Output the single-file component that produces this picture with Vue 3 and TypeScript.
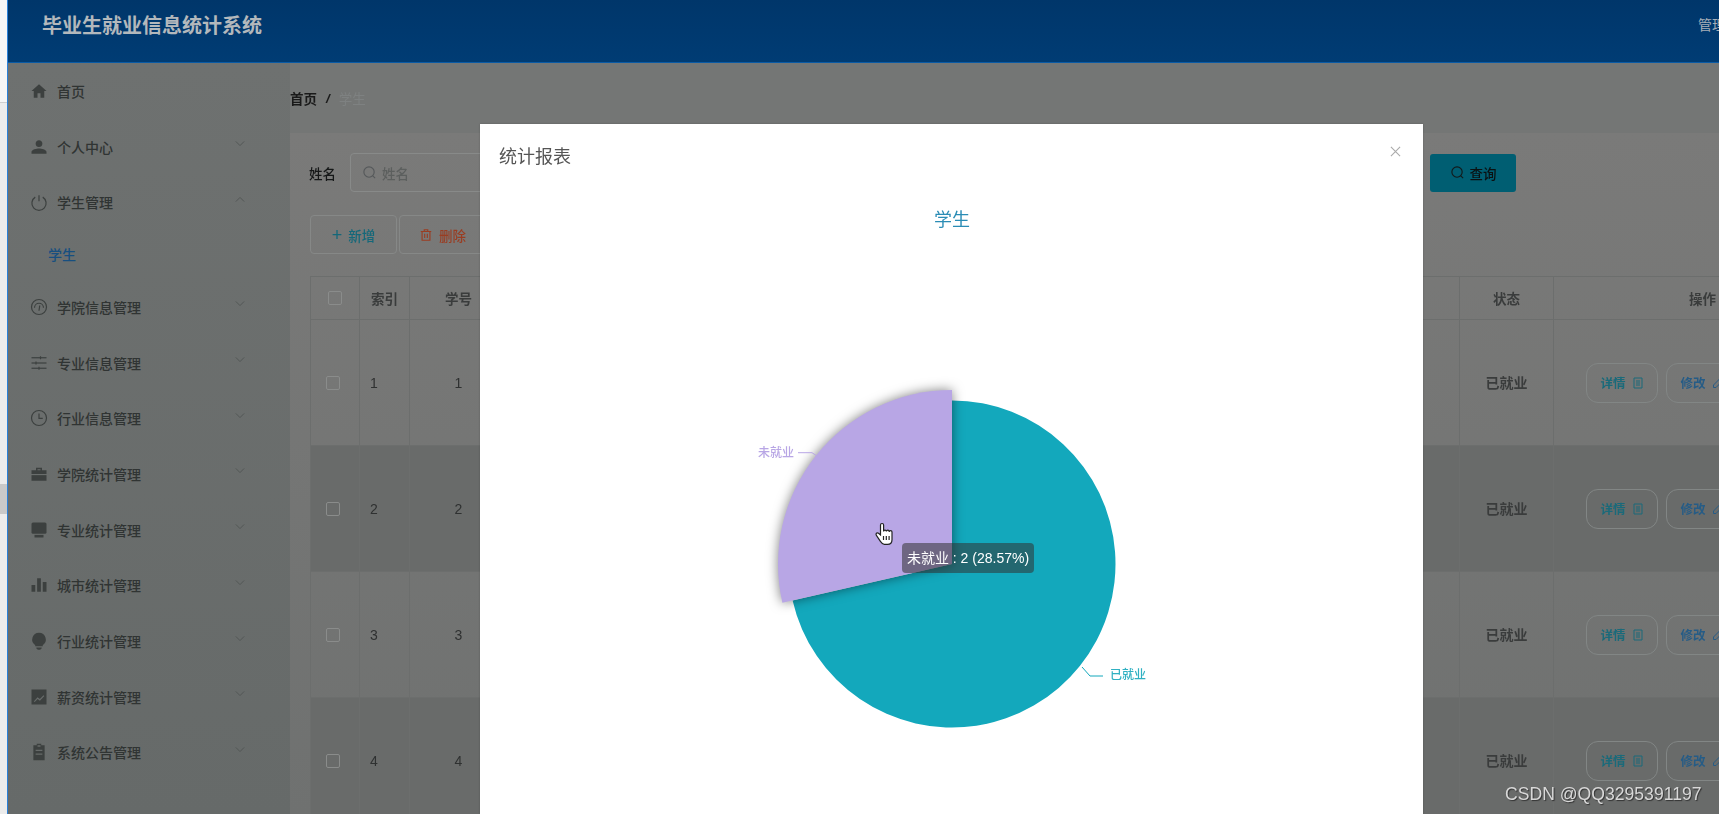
<template>
  <div class="screen">
    <div class="behind">
      <div class="behind-top"></div>
      <div class="behind-tab"></div>
    </div>

    <div class="page">
      <header class="topbar">
        <div class="brand">毕业生就业信息统计系统</div>
        <div class="user">管理员 admin</div>
      </header>

      <div class="body">
        <aside class="sidebar">
          <template v-for="item in menu" :key="item.label">
            <div class="menu-item">
              <svg class="menu-icon" viewBox="0 0 24 24">
                <path v-for="d in item.fill" :key="d" :d="d" class="solid" />
                <path v-for="d in item.line" :key="d" :d="d" class="outline" />
              </svg>
              <span>{{ item.label }}</span>
              <svg v-if="item.arrow" class="chevron" viewBox="0 0 12 8">
                <path :d="item.arrow === 'up' ? 'M1 6.5 6 1.5l5 5' : 'M1 1.5l5 5 5-5'" />
              </svg>
            </div>
            <div v-if="item.sub" class="menu-sub">{{ item.sub }}</div>
          </template>
        </aside>

        <main class="content">
          <div class="crumbs">
            <b>首页</b>
            <i>/</i>
            <span>学生</span>
          </div>

          <section class="card">
            <div class="search">
              <label>姓名</label>
              <div class="field">
                <svg class="field-icon" viewBox="0 0 16 16">
                  <circle cx="7.5" cy="7.5" r="5.5" />
                  <path d="M11.5 11.5 14 14" />
                </svg>
                <span>姓名</span>
              </div>
              <button class="query">
                <svg class="field-icon dark" viewBox="0 0 16 16">
                  <circle cx="7.5" cy="7.5" r="5.5" />
                  <path d="M11.5 11.5 14 14" />
                </svg>
                查询
              </button>
            </div>

            <div class="actions">
              <button class="tool add"><em>+</em>新增</button>
              <button class="tool del">
                <svg class="bin" viewBox="0 0 16 16">
                  <path d="M2 4h12M6 4V2h4v2M3.5 4v10h9V4M6.5 6.5v5M9.5 6.5v5" />
                </svg>
                删除
              </button>
            </div>

            <div class="table">
              <div class="row head">
                <div class="cell"><span class="check head-check"></span></div>
                <div class="cell center">索引</div>
                <div class="cell center">学号</div>
                <div class="cell"></div>
                <div class="cell center">状态</div>
                <div class="cell center">操作</div>
              </div>
              <div v-for="n in rows" :key="n" class="row item" :class="{ stripe: n % 2 === 0 }">
                <div class="cell"><span class="check"></span></div>
                <div class="cell index">{{ n }}</div>
                <div class="cell center">{{ n }}</div>
                <div class="cell"></div>
                <div class="cell center status">已就业</div>
                <div class="cell ops">
                  <button class="op detail">
                    详情
                    <svg viewBox="0 0 12 12"><path d="M2 1h8v10H2zM4 4h4M4 6h4M4 8h4" /></svg>
                  </button>
                  <button class="op edit">
                    修改
                    <svg viewBox="0 0 12 12"><path d="M8 1.500 10.500 4 4 10.500H1.500V8z" /></svg>
                  </button>
                </div>
              </div>
            </div>
          </section>
        </main>
      </div>
    </div>

    <div class="dialog">
      <div class="dialog-head">
        <span>统计报表</span>
        <svg class="close" viewBox="0 0 12 12"><path d="M1 1l10 10M11 1 1 11" /></svg>
      </div>
      <div class="chart">
        <svg class="pie" viewBox="0 0 943 626">
          <text x="472" y="38" text-anchor="middle" class="chart-title">学生</text>
          <path :d="employedPath" fill="#13a8bc" />
          <path :d="unemployedPath" fill="#b8a6e5" class="lifted" />
          <polyline points="318,264.700 332,264.700 337,268" class="leader purple" />
          <text x="278" y="269" class="slice-label purple-text">未就业</text>
          <polyline points="602,479 610,488 623,488" class="leader teal" />
          <text x="630" y="491" class="slice-label teal-text">已就业</text>
        </svg>
        <div class="tooltip">未就业 : 2 (28.57%)</div>
        <svg class="hand" viewBox="0 0 24 24">
          <path d="M9 1.500c-.8 0-1.500.7-1.500 1.500v10l-2-1.800c-.7-.6-1.700-.5-2.200.2-.4.6-.3 1.400.1 2l4 6c.9 1.300 2.300 3 3.900 3h3.200c2.700 0 4.500-2 4.500-4.600V10c0-.8-.6-1.400-1.400-1.400s-1.400.6-1.400 1.400v-.5c0-.8-.6-1.400-1.400-1.400-.8 0-1.400.6-1.400 1.400 0-.8-.6-1.400-1.400-1.400s-1.400.6-1.400 1.400V3c0-.8-.7-1.500-1.500-1.500z" />
          <path d="M10.500 14v4M13.300 14v4M16.100 14v4" />
        </svg>
      </div>
    </div>

    <div class="watermark">CSDN @QQ3295391197</div>
  </div>
</template>

<script setup lang="ts">
interface MenuItem {
  label: string
  fill?: string[]
  line?: string[]
  arrow?: 'up' | 'down'
  sub?: string
}

const menu: MenuItem[] = [
  { label: '首页', fill: ['M10 21v-6h4v6h5v-9h3L12 3 2 12h3v9z'] },
  {
    label: '个人中心',
    arrow: 'down',
    fill: ['M12 12c2.600 0 4.500-2 4.500-4.500S14.600 3 12 3 7.500 5 7.500 7.500 9.400 12 12 12zm0 2c-3 0-10 1.500-10 4.500V21h20v-2.500c0-3-7-4.500-10-4.500z']
  },
  {
    label: '学生管理',
    arrow: 'up',
    sub: '学生',
    line: ['M12 3v8', 'M7 5.500a9.500 9.500 0 1 0 10 0']
  },
  {
    label: '学院信息管理',
    arrow: 'down',
    line: ['M12 2a10 10 0 1 0 0 20 10 10 0 0 0 0-20z', 'M6 13a6 6 0 1 1 12 0', 'M12 17l1-7']
  },
  {
    label: '专业信息管理',
    arrow: 'down',
    line: ['M2 5h20', 'M2 12h20', 'M2 19h20', 'M14 3v4', 'M8 10v4', 'M12 17v4']
  },
  {
    label: '行业信息管理',
    arrow: 'down',
    line: ['M12 2a10 10 0 1 0 0 20 10 10 0 0 0 0-20z', 'M12 6v6.500h5']
  },
  {
    label: '学院统计管理',
    arrow: 'down',
    fill: ['M8 7V3.500h8V7h6v5H2V7zm2-1.500V7h4V5.500z', 'M2 13.500h20V21H2z']
  },
  {
    label: '专业统计管理',
    arrow: 'down',
    fill: ['M4 2h16a2 2 0 0 1 2 2v11a2 2 0 0 1-2 2H4a2 2 0 0 1-2-2V4a2 2 0 0 1 2-2z', 'M6 18.500h12V22H6z']
  },
  {
    label: '城市统计管理',
    arrow: 'down',
    fill: ['M2 12h5v9H2z', 'M9.500 3h5v18h-5z', 'M17 8h5v13h-5z']
  },
  {
    label: '行业统计管理',
    arrow: 'down',
    fill: ['M12 1a9 9 0 0 0-5 16.500V19h10v-1.500A9 9 0 0 0 12 1z', 'M8.500 20.500h7V22l-2 1.500h-3l-2-1.500z']
  },
  {
    label: '薪资统计管理',
    arrow: 'down',
    fill: ['M2 2h20v20H2zM5 17.500l1.200 1 4-4 3 2.500 6-6.500-1.200-1-4.900 5.300-3-2.500-5.100 5.700z']
  },
  {
    label: '系统公告管理',
    arrow: 'down',
    fill: ['M9 1h6v2h4.500v20h-15V3H9zM7.500 9v1.500h9V9zm0 5v1.500h9V14zM10 3v2h4V3z']
  }
]

const rows = [1, 2, 3, 4]

const cx = 472
const cy = 376

// echarts style angle: clockwise from twelve o'clock
function point(r: number, deg: number): string {
  const a = (deg * Math.PI) / 180
  return `${(cx + r * Math.sin(a)).toFixed(2)} ${(cy - r * Math.cos(a)).toFixed(2)}`
}

function slice(r: number, from: number, to: number): string {
  const large = to - from > 180 ? 1 : 0
  return `M${cx} ${cy}L${point(r, from)}A${r} ${r} 0 ${large} 1 ${point(r, to)}Z`
}

const split = (5 / 7) * 360
const employedPath = slice(163.5, 0, split)
const unemployedPath = slice(174, split, 360)
</script>

<style>
html,
body {
  margin: 0;
  background: #f2f2f2;
}
</style>

<style scoped>
.screen {
  position: relative;
  display: flex;
  width: 1719px;
  height: 814px;
  overflow: hidden;
  font-family: "Liberation Sans", "Noto Sans CJK SC", sans-serif;
  font-size: 14px;
}

.behind {
  flex: none;
  width: 7px;
  background: #ececec;
  border-right: 1px solid #2a80d8;
}

.behind-top {
  height: 102px;
  background: #f6f6f6;
  border-bottom: 1px solid #cfcfcf;
}

.behind-tab {
  height: 30px;
  margin-top: 381px;
  background: #c9c9c9;
}

.page {
  flex: none;
  display: flex;
  flex-direction: column;
  width: 1843px;
  filter: blur(0.6px);
}

.topbar {
  flex: none;
  display: flex;
  align-items: flex-start;
  height: 62px;
  padding-left: 34px;
  background: linear-gradient(180deg, #00366a, #003c74);
  border-bottom: 1px solid #0a5ba5;
}

.brand {
  width: 1656px;
  line-height: 52px;
  font-size: 20px;
  font-weight: 700;
  color: #b3b8bc;
}

.user {
  line-height: 50px;
  white-space: nowrap;
  color: #a8afb8;
}

.body {
  flex: 1;
  display: flex;
  min-height: 0;
}

.sidebar {
  flex: none;
  width: 282px;
  background: linear-gradient(180deg, #6e7170, #666a69);
  color: #303433;
  font-weight: 500;
}

.menu-item {
  display: flex;
  align-items: center;
  height: 55.700px;
  padding-left: 22px;
}

.menu-icon {
  flex: none;
  width: 18px;
  height: 18px;
  margin-right: 9px;
}

.solid {
  fill: #3c403f;
}

.outline {
  fill: none;
  stroke: #3c403f;
  stroke-width: 1.600;
}

.chevron {
  width: 10px;
  height: 7px;
  margin-left: auto;
  margin-right: 45px;
  margin-top: -6px;
  fill: none;
  stroke: #535756;
  stroke-width: 1.200;
}

.menu-sub {
  height: 49px;
  padding-left: 40px;
  line-height: 50px;
  color: #174f80;
}

.content {
  flex: 1;
  display: flex;
  flex-direction: column;
  min-width: 0;
  background: #747675;
}

.crumbs {
  flex: none;
  display: flex;
  align-items: center;
  gap: 9px;
  height: 70px;
  font-size: 13.500px;
}

.crumbs b {
  color: #1a1a1a;
}

.crumbs i {
  font-weight: 700;
  color: #1a1a1a;
}

.crumbs span {
  color: #7e8181;
}

.card {
  flex: none;
  height: 681px;
  box-sizing: border-box;
  padding: 20px 20px 0;
  background: linear-gradient(180deg, #7a7a79, #6f7170);
}

.search {
  display: flex;
  align-items: center;
  height: 39px;
}

.search label {
  width: 40px;
  margin-left: -1px;
  margin-right: 1px;
  color: #161818;
  font-size: 13.500px;
  font-weight: 500;
}

.field {
  display: flex;
  align-items: center;
  width: 1070px;
  height: 39px;
  box-sizing: border-box;
  padding-left: 11px;
  border: 1px solid #888a89;
  border-radius: 4px;
  color: #5c5f5e;
  font-size: 13.500px;
  font-weight: 500;
}

.field-icon {
  width: 15px;
  height: 15px;
  margin-right: 5px;
  fill: none;
  stroke: #55585a;
  stroke-width: 1.200;
}

.field-icon.dark {
  stroke: #12191a;
}

.query {
  display: flex;
  align-items: center;
  justify-content: center;
  width: 86px;
  height: 38px;
  margin-left: 10px;
  padding: 0;
  border: 0;
  border-radius: 3px;
  background: #005e72;
  color: #0a1112;
  font: inherit;
  font-size: 13.500px;
  font-weight: 500;
}

.actions {
  display: flex;
  gap: 2px;
  height: 39px;
  margin-top: 23px;
}

.tool {
  display: flex;
  align-items: center;
  justify-content: center;
  width: 87px;
  height: 39px;
  padding: 0;
  background: transparent;
  border: 1px solid #868887;
  border-radius: 4px;
  font: inherit;
  font-size: 13.500px;
  font-weight: 500;
}

.tool em {
  margin-right: 6px;
  font-style: normal;
  font-size: 18px;
  line-height: 1;
}

.add {
  color: #14687a;
}

.del {
  color: #9a3d22;
}

.bin {
  width: 14px;
  height: 14px;
  margin-right: 6px;
  fill: none;
  stroke: #9a3d22;
  stroke-width: 1.300;
}

.table {
  width: 1541px;
  margin-top: 22px;
  border-top: 1px solid #6c6e6d;
  color: #2f3131;
}

.row {
  display: grid;
  grid-template-columns: 49px 50px 98px 1fr 94px 298px;
  border-bottom: 1px solid #6c6e6d;
}

.head {
  height: 42px;
  font-size: 13.500px;
  font-weight: 700;
  color: #3a3c3c;
}

.item {
  height: 125px;
}

.stripe {
  background: #696b6a;
}

.cell {
  display: flex;
  align-items: center;
  border-left: 1px solid #6c6e6d;
  min-width: 0;
}

.center {
  justify-content: center;
}

.index {
  padding-left: 10px;
}

.status {
  padding-bottom: 2px;
  font-weight: 700;
  color: #3a3c3c;
}

.check {
  display: block;
  width: 12px;
  height: 12px;
  margin-left: 15px;
  border: 1px solid #8a8c8b;
  border-radius: 2px;
}

.head-check {
  margin-left: 17px;
}

.ops {
  gap: 8px;
  padding-left: 32px;
}

.op {
  display: flex;
  align-items: center;
  justify-content: center;
  gap: 6px;
  width: 72px;
  height: 40px;
  padding: 0;
  background: transparent;
  border: 1px solid #828685;
  border-radius: 12px;
  font: inherit;
  font-size: 12.500px;
  font-weight: 700;
}

.op svg {
  width: 12px;
  height: 12px;
  fill: none;
  stroke: currentColor;
  stroke-width: 1;
}

.detail {
  color: #1a6a7a;
}

.edit {
  color: #265c86;
}

.dialog {
  position: absolute;
  left: 480px;
  top: 124px;
  width: 943px;
  height: 690px;
  background: #fff;
  box-shadow: 0 0 2px rgba(0, 0, 0, 0.2);
}

.dialog-head {
  display: flex;
  align-items: center;
  justify-content: space-between;
  height: 64px;
  box-sizing: border-box;
  padding: 0 22px 2px 19px;
  color: #555;
  font-size: 18px;
}

.close {
  width: 11px;
  height: 11px;
  margin-top: -7px;
  fill: none;
  stroke: #aaa;
  stroke-width: 1.200;
}

.chart {
  position: relative;
  height: 626px;
}

.pie {
  display: block;
  width: 943px;
  height: 626px;
}

.chart-title {
  font-size: 18px;
  fill: #2a8cb5;
}

.lifted {
  filter: drop-shadow(0 0 6px rgba(0, 0, 0, 0.5));
}

.leader {
  fill: none;
  stroke-width: 1;
}

.leader.purple {
  stroke: #b8a6e5;
}

.leader.teal {
  stroke: #13a8bc;
}

.slice-label {
  font-size: 12px;
  font-weight: 500;
}

.purple-text {
  fill: #b8a6e5;
}

.teal-text {
  fill: #2fb0c2;
}

.tooltip {
  position: absolute;
  left: 422px;
  top: 355px;
  width: 132px;
  height: 30px;
  line-height: 30px;
  text-align: center;
  white-space: nowrap;
  border-radius: 4px;
  background: rgba(50, 50, 50, 0.55);
  color: #fff;
  font-size: 14px;
}

.hand {
  position: absolute;
  left: 393px;
  top: 333px;
  width: 24px;
  height: 26px;
  fill: #fff;
  stroke: #222;
  stroke-width: 1.200;
}

.watermark {
  position: absolute;
  left: 1505px;
  top: 782px;
  line-height: 24px;
  white-space: nowrap;
  font-family: "Liberation Sans", sans-serif;
  font-size: 17.600px;
  color: #d8d8d8;
  text-shadow: 1px 1px 1px #333;
}
</style>
